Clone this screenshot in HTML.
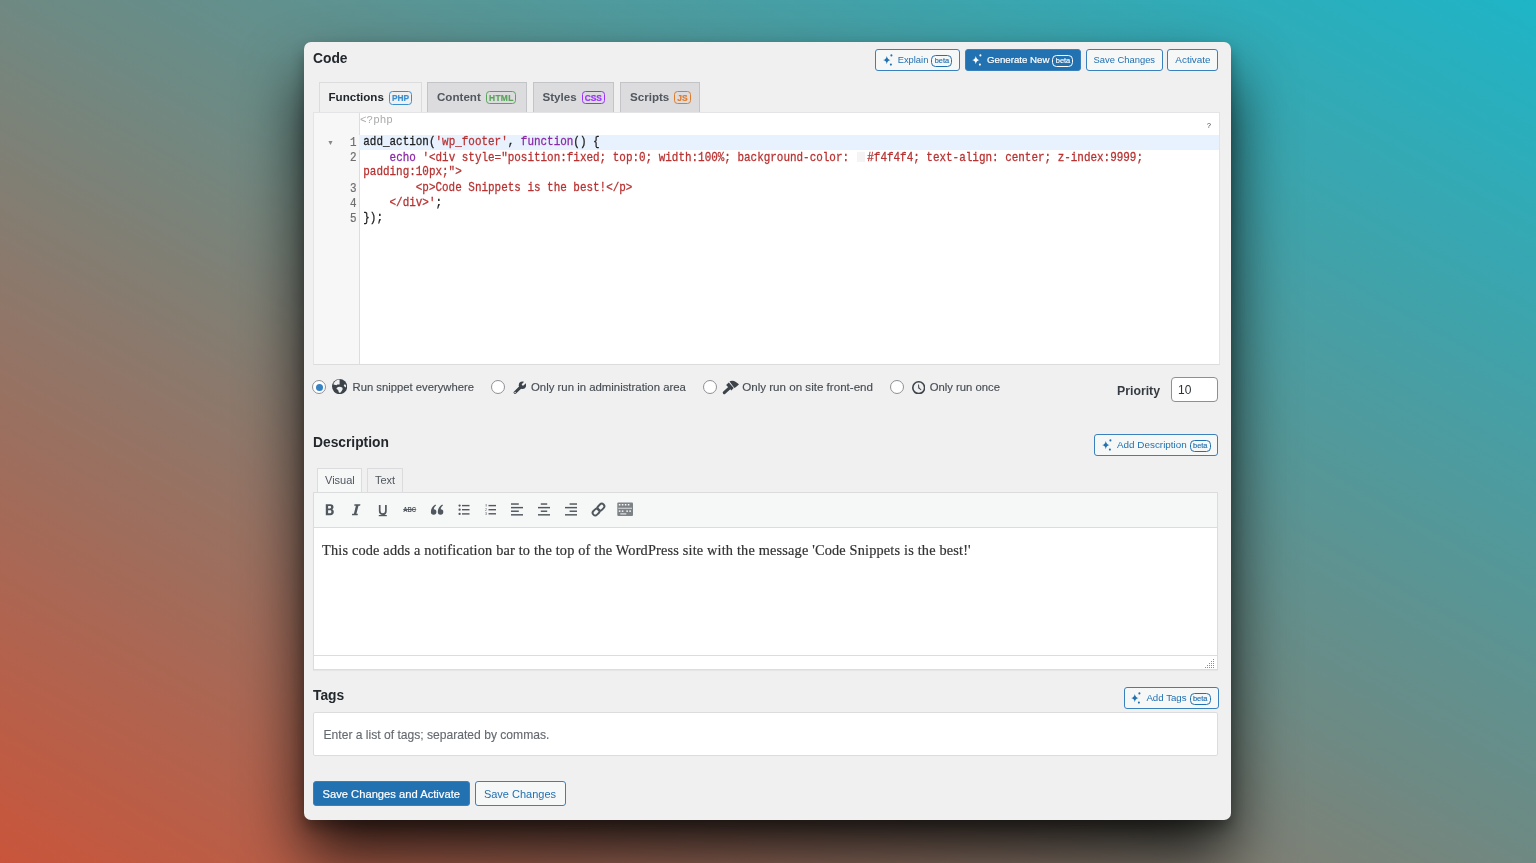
<!DOCTYPE html>
<html><head><meta charset="utf-8">
<style>
*{box-sizing:border-box;margin:0;padding:0}
html,body{width:1536px;height:863px;overflow:hidden}
body{position:relative;font-family:"Liberation Sans",sans-serif;background:linear-gradient(to top right,#c9553b 0%,#6f8982 50%,#1eb5c7 100%);}
.panel{position:absolute;left:304px;top:42px;width:927px;height:778px;background:#f0f0f1;border-radius:7px;box-shadow:0 8px 14px rgba(0,0,0,0.3),0 36px 62px rgba(0,0,0,0.8);}
.abs{position:absolute}
.h{font-weight:bold;color:#23282d;font-size:13.8px;line-height:1}
.btn{position:absolute;height:22px;border:1px solid #3a80bd;border-radius:3px;background:#f6f7f7;color:#2271b1;font-size:9.5px;line-height:20px;white-space:nowrap;display:flex;align-items:center;justify-content:center}
.sp{margin-right:5px;flex:none}
.btn.primary{background:#2271b1;color:#fff;-webkit-text-stroke:0.2px #fff}
.beta{position:relative;top:0.7px;display:inline-block;border:1px solid currentColor;border-radius:4.5px;font-size:7.4px;font-weight:normal;-webkit-text-stroke:0.15px currentColor;line-height:10.5px;height:11.7px;padding:0 2.3px;margin-left:3px;}
.tab{position:absolute;top:82px;height:30px;border:1px solid #c3c4c7;border-bottom:none;background:#dcdcde;color:#50575e;font-weight:bold;font-size:11.6px;display:flex;align-items:center;padding-left:9px;padding-bottom:3px;white-space:nowrap}
.tab.active{background:#f0f0f1;color:#1d2327;border-color:#dcdcde;height:31px}
.badge{position:relative;top:1.6px;display:inline-block;border:1px solid;border-radius:3.5px;font-size:8.4px;line-height:12.6px;height:13.6px;padding:0 2px;margin-left:5px;font-weight:bold;-webkit-text-stroke:0.2px currentColor}
.editor{position:absolute;left:313px;top:111.5px;width:906.5px;height:253px;background:#fff;border:1px solid #e4e4e6;border-bottom-color:#dcdcde}
.gutter{position:absolute;left:0;top:0;width:46px;height:100%;background:#f7f7f7;border-right:1px solid #ddd}
.code{font-family:"Liberation Mono",monospace;font-size:10.95px;line-height:15.25px;white-space:pre;-webkit-text-stroke:0.25px currentColor}
.ln{position:absolute;width:42.5px;text-align:right;color:#6e6e6e;transform:scaleY(1.12);-webkit-text-stroke:0.2px #6e6e6e;font-family:"Liberation Mono",monospace;font-size:10.9px;line-height:15.25px}
.kw{color:#8a2aa6}.str{color:#b83232}.cm{color:#aaa}
.radio{position:absolute;top:380px;width:14px;height:14px;border-radius:50%;border:1px solid #8c8f94;background:#fff}
.opt{position:absolute;top:380px;font-size:11.4px;color:#474d53;-webkit-text-stroke:0.15px #474d53;line-height:14px;white-space:nowrap}
</style></head>
<body>
<div class="panel"></div>
<div id="ui" style="position:absolute;left:0;top:0;width:1536px;height:863px;will-change:transform">

<div class="abs h" style="left:313px;top:51.5px;">Code</div>

<div class="btn" style="left:875px;top:49px;width:85px;font-size:9.4px"><svg class="sp" width="10" height="12" viewBox="0 0 10 12"><path d="M3.8 2Q4.3 5.6 7.6 6.1Q4.3 6.6 3.8 10.2Q3.3 6.6 0 6.1Q3.3 5.6 3.8 2Z" fill="currentColor"/><circle cx="8.4" cy="1.4" r="1.05" fill="currentColor"/><circle cx="7.9" cy="10.6" r="1.05" fill="currentColor"/></svg>Explain<span class="beta">beta</span></div>
<div class="btn primary" style="left:965px;top:49px;width:115.5px;font-size:9.7px"><svg class="sp" width="10" height="12" viewBox="0 0 10 12"><path d="M3.8 2Q4.3 5.6 7.6 6.1Q4.3 6.6 3.8 10.2Q3.3 6.6 0 6.1Q3.3 5.6 3.8 2Z" fill="currentColor"/><circle cx="8.4" cy="1.4" r="1.05" fill="currentColor"/><circle cx="7.9" cy="10.6" r="1.05" fill="currentColor"/></svg>Generate New<span class="beta">beta</span></div>
<div class="btn" style="left:1086px;top:49px;width:76.6px;font-size:9.4px">Save Changes</div>
<div class="btn" style="left:1167.4px;top:49px;width:51.1px;font-size:9.9px">Activate</div>

<div class="tab active" style="left:318.5px;width:103px;">Functions<span class="badge" style="color:#3c8fcf">PHP</span></div>
<div class="tab" style="left:427px;width:100px;">Content<span class="badge" style="color:#5aa45a;letter-spacing:0.35px;padding:0 1.8px 0 2.2px">HTML</span></div>
<div class="tab" style="left:532.5px;width:81.5px;">Styles<span class="badge" style="color:#9b30ff">CSS</span></div>
<div class="tab" style="left:620px;width:80px;">Scripts<span class="badge" style="color:#e07b2a">JS</span></div>

<div class="editor">
  <div class="gutter"></div>
  <div class="abs" style="left:45px;right:0;top:22.5px;height:14.8px;background:#e8f2ff"></div>
  <div class="abs code cm" style="left:46px;top:0px;-webkit-text-stroke:0">&lt;?php</div>
  <div class="abs" style="left:13px;top:26px;font-size:7px;color:#888">▼</div>
  <div class="ln" style="left:0;top:23px">1</div>
  <div class="ln" style="left:0;top:38.7px">2</div>
  <div class="ln" style="left:0;top:69.6px">3</div>
  <div class="ln" style="left:0;top:84.5px">4</div>
  <div class="ln" style="left:0;top:99.25px">5</div>
  <div class="abs code" style="left:49.3px;top:22.3px;color:#1e1e1e;line-height:13.616px;transform:scaleY(1.12);transform-origin:0 0">add_action(<span class="str">'wp_footer'</span>, <span class="kw">function</span>() {
    <span class="kw">echo</span> <span class="str">'&lt;div style="position:fixed; top:0; width:100%; background-color: <span style="display:inline-block;width:8px;height:9px;background:#f4f4f4;vertical-align:-1px;margin:0 2px 0 1.7px"></span>#f4f4f4; text-align: center; z-index:9999;</span>
<span class="str">padding:10px;"&gt;</span>
<span class="str">        &lt;p&gt;Code Snippets is the best!&lt;/p&gt;</span>
<span class="str">    &lt;/div&gt;'</span>;
});</div>
  <div class="abs" style="right:7.5px;top:9.5px;font-size:7px;color:#333">?</div>
</div>

<div class="abs h" style="left:313px;top:436px;">Description</div>
<div class="abs h" style="left:313px;top:689px;">Tags</div>


<div class="radio" style="left:312px;"><div style="position:absolute;left:2.5px;top:2.5px;width:7px;height:7px;border-radius:50%;background:#3582c4"></div></div>
<svg class="abs" style="left:332.1px;top:379px" width="15.2" height="15.2" viewBox="0 0 20 20"><circle cx="10" cy="10" r="10" fill="#3c434a"/><path fill="#f0f0f1" d="M10 0.7L10 7.4L6.8 7.1L6.2 8.1L1.9 7.4L2.4 5.3L4.6 2.5L7.4 0.9Z"/><path fill="#f0f0f1" d="M5.9 12.1L7.8 10.5L10.6 10.2L13.5 11.2L14.1 13.3L12.8 15.8L10.6 18.3L9 17.4L8.1 14.6L6.2 13.3Z"/><path fill="#f0f0f1" d="M15.4 8.4L17 6.5L18.6 8.4L18.3 11.2L16.6 10.2Z"/></svg>
<div class="opt" style="left:352.6px;font-size:11.26px">Run snippet everywhere</div>

<div class="radio" style="left:491px;"></div>
<svg class="abs" style="left:512.5px;top:380.8px" width="13.5" height="13.5" viewBox="0 0 20 20"><line x1="3.1" y1="17" x2="12" y2="8.4" stroke="#3c434a" stroke-width="4.4" stroke-linecap="round"/><circle cx="14" cy="6.3" r="5.4" fill="#3c434a"/><line x1="14.8" y1="5.2" x2="21" y2="-1" stroke="#f0f0f1" stroke-width="3.4" stroke-linecap="round"/><circle cx="3.1" cy="17" r="1" fill="#f0f0f1"/></svg>
<div class="opt" style="left:531px;font-size:11.38px">Only run in administration area</div>

<div class="radio" style="left:703px;"></div>
<svg class="abs" style="left:718px;top:374px" width="30" height="26" viewBox="0 0 30 26" fill="#3c434a"><line x1="6.3" y1="18.6" x2="11" y2="14.3" stroke="#3c434a" stroke-width="3.1" stroke-linecap="round"/><path d="M8.1 11.1L10.8 8.5L15.7 13.9L13.4 16.5Z"/><path d="M11.5 7.6C12.8 6.4 15.6 6.3 17.9 7.9L21 10.2C19.8 11.6 18.1 13 16.4 14Z"/></svg>
<div class="opt" style="left:742.2px;font-size:11.6px">Only run on site front-end</div>

<div class="radio" style="left:890px;"></div>
<svg class="abs" style="left:911.5px;top:380.8px" width="13.4" height="13.4" viewBox="0 0 13.4 13.4"><circle cx="6.7" cy="6.7" r="5.9" fill="none" stroke="#3c434a" stroke-width="1.6"/><path d="M6.1 3.6L7 3.6L7.3 6.6L9.5 8.7L8.9 9.2L6.2 7.3Z" fill="#3c434a"/></svg>
<div class="opt" style="left:929.7px;font-size:11.3px">Only run once</div>

<div class="abs" style="left:1117px;top:384px;font-weight:bold;font-size:12.3px;color:#363b41">Priority</div>
<div class="abs" style="left:1171px;top:377px;width:47px;height:25px;border:1px solid #8c8f94;border-radius:4px;background:#fff;font-size:12px;color:#2c3338;padding:5px 0 0 6px">10</div>

<div class="btn" style="left:1094.4px;top:434px;width:124px;font-size:9.9px"><svg class="sp" width="10" height="12" viewBox="0 0 10 12"><path d="M3.8 2Q4.3 5.6 7.6 6.1Q4.3 6.6 3.8 10.2Q3.3 6.6 0 6.1Q3.3 5.6 3.8 2Z" fill="currentColor"/><circle cx="8.4" cy="1.4" r="1.05" fill="currentColor"/><circle cx="7.9" cy="10.6" r="1.05" fill="currentColor"/></svg>Add Description<span class="beta">beta</span></div>

<div class="abs" style="left:317px;top:468px;width:45px;height:25px;background:#f6f7f7;border:1px solid #dcdcde;border-bottom:none;font-size:11px;color:#50575e;padding:4.6px 0 0 7px">Visual</div>
<div class="abs" style="left:366.5px;top:468px;width:36.5px;height:24px;background:#f0f0f1;border:1px solid #dcdcde;border-bottom:none;font-size:11px;color:#50575e;padding:4.6px 0 0 7.5px">Text</div>

<div class="abs" style="left:313px;top:492px;width:905px;height:177.5px;border:1px solid #dcdcde;background:#fff;box-shadow:0 1px 1px rgba(0,0,0,.04)">
  <div class="abs" style="left:0;top:0;right:0;height:35px;background:#f6f7f7;border-bottom:1px solid #dcdcde"></div>
  <div class="abs" style="left:8px;top:49px;font-family:'Liberation Serif',serif;font-size:14.3px;letter-spacing:0.18px;color:#333;-webkit-text-stroke:0.2px #333;white-space:nowrap">This code adds a notification bar to the top of the WordPress site with the message 'Code Snippets is the best!'</div>
  <div class="abs" style="left:0;right:0;top:162px;height:1px;background:#dcdcde"></div>
  <svg class="abs" style="right:2px;bottom:1px" width="10" height="9" viewBox="0 0 10 9" fill="#8c8f94"><rect x="8" y="0" width="1" height="1"/><rect x="6" y="2" width="1" height="1"/><rect x="8" y="2" width="1" height="1"/><rect x="4" y="4" width="1" height="1"/><rect x="6" y="4" width="1" height="1"/><rect x="8" y="4" width="1" height="1"/><rect x="2" y="6" width="1" height="1"/><rect x="4" y="6" width="1" height="1"/><rect x="6" y="6" width="1" height="1"/><rect x="8" y="6" width="1" height="1"/><rect x="0" y="8" width="1" height="1"/><rect x="2" y="8" width="1" height="1"/><rect x="4" y="8" width="1" height="1"/><rect x="6" y="8" width="1" height="1"/><rect x="8" y="8" width="1" height="1"/></svg>
</div>


<svg class="abs" style="left:0;top:0" width="1536" height="863" viewBox="0 0 1536 863" fill="#50575e">
 <g transform="translate(325.8,504.2)"><path fill-rule="evenodd" d="M0 0H4.6C6.8 0 7.7 1.3 7.7 2.8C7.7 3.9 7.1 4.7 6.2 5.1C7.4 5.4 8 6.4 8 7.7C8 9.6 6.8 11 4.5 11H0ZM2.3 1.9V4.3H4.1C4.9 4.3 5.3 3.8 5.3 3.1C5.3 2.4 4.9 1.9 4.1 1.9ZM2.3 6.1V9.1H4.3C5.2 9.1 5.6 8.5 5.6 7.6C5.6 6.7 5.2 6.1 4.3 6.1Z"/></g>
 <g transform="translate(351.9,504.2)"><path d="M2.6 0H8.5L8.2 1.5H6.6L4.5 9.5H6L5.7 11H0L0.3 9.5H2L4 1.5H2.3Z"/></g>
 <g transform="translate(378.8,504.9)"><path d="M0.9 0V6C0.9 8.1 2.2 9.3 4 9.3C5.8 9.3 7.1 8.1 7.1 6V0" fill="none" stroke="#50575e" stroke-width="1.7"/><rect x="0" y="10.1" width="8" height="1.2"/></g>
 <g transform="translate(403.2,506.5)"><text x="0" y="5.6" font-family="Liberation Sans" font-weight="bold" font-size="7.6" textLength="13" lengthAdjust="spacingAndGlyphs">ABC</text><rect x="0" y="2.5" width="13" height="0.9"/></g>
 <g transform="translate(430.7,504.5)"><path d="M2.9 10.2A2.7 2.7 0 0 1 0.2 7.5C0.2 4.4 1.7 1.6 4.6 0L5.4 1.1C3.9 2.1 3.2 3.4 3.1 4.8A2.7 2.7 0 0 1 2.9 10.2Z"/><path transform="translate(6.9,0)" d="M2.9 10.2A2.7 2.7 0 0 1 0.2 7.5C0.2 4.4 1.7 1.6 4.6 0L5.4 1.1C3.9 2.1 3.2 3.4 3.1 4.8A2.7 2.7 0 0 1 2.9 10.2Z"/></g>
 <g transform="translate(458.5,504.3)"><circle cx="1.1" cy="1.3" r="1.15"/><circle cx="1.1" cy="5.4" r="1.15"/><circle cx="1.1" cy="9.6" r="1.15"/><rect x="3.5" y="0.6" width="7.5" height="1.4"/><rect x="3.5" y="4.7" width="7.5" height="1.4"/><rect x="3.5" y="8.9" width="7.5" height="1.4"/></g>
 <g transform="translate(485,504)"><rect x="0.8" y="0" width="0.6" height="2.6"/><text x="0" y="7" font-size="3.5" font-family="Liberation Sans">2</text><text x="0" y="10.8" font-size="3.5" font-family="Liberation Sans">3</text><rect x="3.5" y="0.9" width="7.5" height="1.4"/><rect x="3.5" y="5" width="7.5" height="1.4"/><rect x="3.5" y="9.1" width="7.5" height="1.4"/></g>
 <g transform="translate(511,503.3)"><rect x="0" y="0" width="7.8" height="1.45"/><rect x="0" y="3.6" width="12" height="1.45"/><rect x="0" y="7.2" width="7.8" height="1.45"/><rect x="0" y="10.8" width="12" height="1.45"/></g>
 <g transform="translate(538,503.3)"><rect x="2.8" y="0" width="6.4" height="1.45"/><rect x="0" y="3.6" width="12" height="1.45"/><rect x="2.8" y="7.2" width="6.4" height="1.45"/><rect x="0" y="10.8" width="12" height="1.45"/></g>
 <g transform="translate(565,503.3)"><rect x="4.6" y="0" width="7.4" height="1.45"/><rect x="0" y="3.6" width="12" height="1.45"/><rect x="4.6" y="7.2" width="7.4" height="1.45"/><rect x="0" y="10.8" width="12" height="1.45"/></g>
 <g transform="translate(598.5,509.6) rotate(-45)" fill="none" stroke="#50575e" stroke-width="1.9"><rect x="-7.2" y="-2.6" width="7.6" height="5.2" rx="2.6"/><rect x="-0.4" y="-2.6" width="7.6" height="5.2" rx="2.6"/></g>
 <g transform="translate(617.3,502.4)"><rect x="0" y="0" width="15.7" height="13.6" rx="1" fill="#7d8287"/><g fill="#f6f7f7"><rect x="1.5" y="1.6" width="1.6" height="1.5"/><rect x="4.5" y="1.6" width="1.6" height="1.5"/><rect x="7.5" y="1.6" width="1.6" height="1.5"/><rect x="10.5" y="1.6" width="1.6" height="1.5"/><rect x="1" y="5.4" width="13.7" height="0.8"/><rect x="1.5" y="8" width="1.6" height="1.5"/><rect x="4.5" y="8" width="1.6" height="1.5"/><rect x="9" y="8" width="1.6" height="1.5"/><rect x="12" y="8" width="1.6" height="1.5"/><rect x="3" y="11" width="6" height="1"/></g></g>
</svg>
<div class="btn" style="left:1123.5px;top:687px;width:95px;font-size:9.7px"><svg class="sp" width="10" height="12" viewBox="0 0 10 12"><path d="M3.8 2Q4.3 5.6 7.6 6.1Q4.3 6.6 3.8 10.2Q3.3 6.6 0 6.1Q3.3 5.6 3.8 2Z" fill="currentColor"/><circle cx="8.4" cy="1.4" r="1.05" fill="currentColor"/><circle cx="7.9" cy="10.6" r="1.05" fill="currentColor"/></svg>Add Tags<span class="beta">beta</span></div>

<div class="abs" style="left:313px;top:711.5px;width:905px;height:44px;background:#fff;border:1px solid #dcdcde;border-radius:2px;font-size:12.1px;color:#646970;-webkit-text-stroke:0.12px #646970;padding:15px 0 0 9.5px">Enter a list of tags; separated by commas.</div>

<div class="btn primary" style="left:313px;top:781px;width:156.5px;height:25px;font-size:11.2px;">Save Changes and Activate</div>
<div class="btn" style="left:474.5px;top:781px;width:91px;height:25px;font-size:11px;">Save Changes</div>
</div>
</body></html>
